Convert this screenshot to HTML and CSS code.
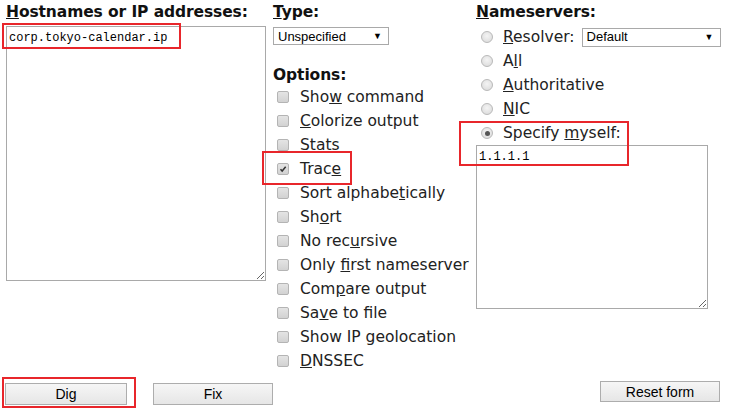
FILE: index.html
```html
<!DOCTYPE html>
<html>
<head>
<meta charset="utf-8">
<link rel="stylesheet" href="styles.css">
</head>
<body>
<form class="page">
  <div class="cols">
    <div class="col col-hosts">
      <h2 class="heading"><u>H</u>ostnames or IP addresses:</h2>
      <textarea class="ta ta-hosts" spellcheck="false">corp.tokyo-calendar.ip</textarea>
    </div>
    <div class="col col-opts">
      <h2 class="heading"><u>T</u>ype:</h2>
      <div class="select sel-type"><span>Unspecified</span><span class="arrow">▼</span></div>
      <h2 class="heading heading-opts">Options:</h2>
      <ul class="list">
        <li><span class="cb"></span><span class="lbl">Sho<u>w</u> command</span></li>
        <li><span class="cb"></span><span class="lbl"><u>C</u>olorize output</span></li>
        <li><span class="cb"></span><span class="lbl">Stats</span></li>
        <li><span class="cb checked"><svg viewBox="0 0 12 12" width="12" height="12"><path d="M3 6.2 L5 8.4 L9.2 3.4" fill="none" stroke="#333" stroke-width="1.8"/></svg></span><span class="lbl">Trac<u>e</u></span></li>
        <li><span class="cb"></span><span class="lbl">Sort alphabe<u>t</u>ically</span></li>
        <li><span class="cb"></span><span class="lbl">Sh<u>o</u>rt</span></li>
        <li><span class="cb"></span><span class="lbl">No rec<u>u</u>rsive</span></li>
        <li><span class="cb"></span><span class="lbl">Only <u>f</u>irst nameserver</span></li>
        <li><span class="cb"></span><span class="lbl">Com<u>p</u>are output</span></li>
        <li><span class="cb"></span><span class="lbl">Sa<u>v</u>e to file</span></li>
        <li><span class="cb"></span><span class="lbl">Show IP geolocation</span></li>
        <li><span class="cb"></span><span class="lbl"><u>D</u>NSSEC</span></li>
      </ul>
    </div>
    <div class="col col-ns">
      <h2 class="heading"><u>N</u>ameservers:</h2>
      <ul class="list list-ns">
        <li><span class="rb"></span><span class="lbl"><u>R</u>esolver:</span><div class="select sel-res"><span>Default</span><span class="arrow">▼</span></div></li>
        <li><span class="rb"></span><span class="lbl">A<u>l</u>l</span></li>
        <li><span class="rb"></span><span class="lbl"><u>A</u>uthoritative</span></li>
        <li><span class="rb"></span><span class="lbl"><u>N</u>IC</span></li>
        <li><span class="rb checked"></span><span class="lbl">Specify <u>m</u>yself:</span></li>
      </ul>
      <textarea class="ta ta-ns" spellcheck="false">1.1.1.1</textarea>
    </div>
  </div>
  <div class="buttons">
    <button type="button" class="btn btn-dig">Dig</button>
    <button type="button" class="btn btn-fix">Fix</button>
    <button type="button" class="btn btn-reset">Reset form</button>
  </div>
  <div class="mark mark-host"></div>
  <div class="mark mark-trace"></div>
  <div class="mark mark-ns"></div>
  <div class="mark mark-dig"></div>
</form>
</body>
</html>
```

FILE: styles.css
```css
html, body {
  margin: 0;
  padding: 0;
  background: #fff;
}
body {
  font-family: "DejaVu Sans", Verdana, sans-serif;
  color: #111;
  width: 732px;
  height: 414px;
  overflow: hidden;
}
.page {
  position: relative;
  margin: 0;
  padding: 2px 0 0 0;
  height: 412px;
}
.cols {
  display: flex;
}
.col-hosts {
  width: 261px;
  margin-left: 6px;
}
.col-opts {
  width: 197px;
  margin-left: 6px;
}
.col-ns {
  width: 256px;
  margin-left: 6px;
}
.heading {
  font-size: 15.5px;
  font-weight: bold;
  margin: 0;
  line-height: 20px;
  height: 20px;
  letter-spacing: -0.1px;
}
.ta {
  display: block;
  box-sizing: border-box;
  border: 1px solid #a9a9a9;
  padding: 4px 2px 2px;
  font-family: "Liberation Mono", monospace;
  font-size: 12px;
  line-height: 15px;
  color: #000;
  resize: both;
  outline: none;
  margin: 0;
}
.ta-hosts {
  margin-top: 4px;
  width: 260px;
  height: 255px;
}
.ta-ns {
  margin-top: 0px;
  width: 232px;
  height: 164px;
}
.select {
  box-sizing: border-box;
  display: flex;
  align-items: center;
  justify-content: space-between;
  border: 1px solid #a9a9a9;
  font-family: "Liberation Sans", Arial, sans-serif;
  font-size: 13px;
  color: #000;
  padding: 0 6px 0 4px;
  background: #fff;
}
.select .arrow {
  font-size: 9px;
}
.sel-type {
  margin-top: 5px;
  width: 116px;
  height: 18px;
}
.heading-opts {
  margin-top: 20px;
}
.list {
  list-style: none;
  margin: 0;
  padding: 0;
  font-size: 15.5px;
  color: #222;
}
.list li {
  height: 24px;
  line-height: 24px;
  display: flex;
  align-items: center;
  white-space: nowrap;
}
.lbl {
  white-space: pre;
}
.list-ns {
  margin-top: 3px;
}
.cb {
  box-sizing: border-box;
  display: inline-flex;
  align-items: center;
  justify-content: center;
  width: 12px;
  height: 12px;
  border: 1px solid #b4b4b4;
  border-radius: 2px;
  background: linear-gradient(#e4e4e4, #d2d2d2);
  margin: 0 11px 0 4px;
  flex: none;
}
.rb {
  box-sizing: border-box;
  display: inline-block;
  width: 12px;
  height: 12px;
  border: 1px solid #b9b9b9;
  border-radius: 50%;
  background: radial-gradient(circle at 50% 40%, #f4f4f4, #d8d8d8);
  margin: 0 10px 0 5px;
  flex: none;
  position: relative;
}
.rb.checked::after {
  content: "";
  position: absolute;
  left: 2.5px;
  top: 2.5px;
  width: 5px;
  height: 5px;
  border-radius: 50%;
  background: #555;
}
.sel-res {
  margin-left: 7px;
  width: 139px;
  height: 19px;
  font-size: 13px;
}
.buttons {
  display: flex;
  align-items: flex-start;
  margin-top: 10px;
}
.btn {
  box-sizing: border-box;
  font-family: "Liberation Sans", Arial, sans-serif;
  font-size: 14px;
  color: #000;
  border: 1px solid #adadad;
  border-radius: 0;
  background: linear-gradient(#f6f6f6, #e6e6e6);
  height: 22px;
  padding: 0;
  margin: 0;
}
.btn-dig {
  margin-left: 5px;
  width: 122px;
}
.btn-fix {
  margin-left: 26px;
  width: 120px;
}
.btn-reset {
  margin-left: auto;
  margin-right: 12px;
  width: 120px;
  height: 21px;
  margin-top: -2px;
}
.mark {
  position: absolute;
  border: 2px solid #e8262b;
  box-sizing: border-box;
}
.mark-host {
  left: 2px;
  top: 23px;
  width: 179px;
  height: 26px;
}
.mark-trace {
  left: 262px;
  top: 151px;
  width: 90px;
  height: 34px;
}
.mark-ns {
  left: 459px;
  top: 121px;
  width: 170px;
  height: 45px;
}
.mark-dig {
  left: 2px;
  top: 377px;
  width: 134px;
  height: 31px;
}
```
